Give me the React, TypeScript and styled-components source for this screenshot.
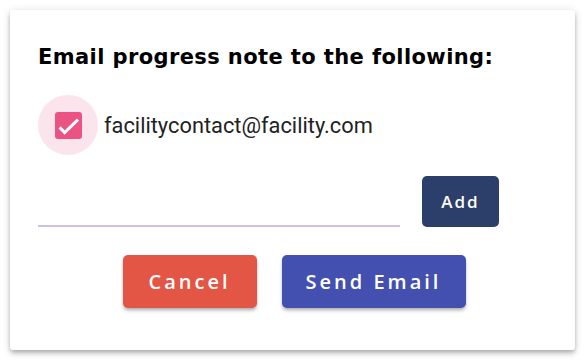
import styled, { createGlobalStyle } from 'styled-components';

const GlobalStyle = createGlobalStyle`
    * {
        box-sizing: border-box;
    }
    body {
        margin: 0;
        background: #ffffff;
    }
`
const StyledCard = styled.div`
    margin: 10px;
    width: 565px;
    height: 340px;
    background: #ffffff;
    border-radius: 3px;
    box-shadow: 0 2px 4px -1px rgba(0, 0, 0, 0.2), 0 4px 5px 0 rgba(0, 0, 0, 0.14), 0 1px 10px 0 rgba(0, 0, 0, 0.12);
    padding: 31px 28px 0 28px;
    display: flex;
    flex-direction: column;
`
const StyledTitle = styled.h2`
    font-family: 'DejaVu Sans', sans-serif;
    font-weight: 700;
    font-size: 21px;
    letter-spacing: 0.4px;
    line-height: 32px;
    color: #000000;
    margin: 0;
`
const StyledContactRow = styled.label`
    display: flex;
    align-items: center;
    gap: 6px;
    margin-top: 22px;
`
const StyledCheckCircle = styled.span`
    width: 60px;
    height: 60px;
    border-radius: 50%;
    background: #fce4ec;
    display: flex;
    align-items: center;
    justify-content: center;
`
const StyledContactText = styled.span`
    font-family: Roboto, sans-serif;
    font-size: 21.8px;
    color: #222222;
`
const StyledInputRow = styled.div`
    display: flex;
    align-items: flex-end;
    gap: 22px;
    margin-top: 21px;
`
const StyledInput = styled.input`
    width: 362px;
    height: 40px;
    border: none;
    border-bottom: 2px solid #cdc1e6;
    outline: none;
    font-family: Roboto, sans-serif;
    font-size: 16px;
    padding: 0;
    background: transparent;
`
const StyledButton = styled.button<{ $bg: string; $w: number; $h: number; $size: number; $spacing: number; $shadow?: boolean }>`
    width: ${({ $w }) => $w}px;
    height: ${({ $h }) => $h}px;
    background: ${({ $bg }) => $bg};
    color: #ffffff;
    border: none;
    border-radius: 5px;
    font-family: 'Open Sans', sans-serif;
    font-weight: 600;
    font-size: ${({ $size }) => $size}px;
    letter-spacing: ${({ $spacing }) => $spacing}px;
    padding: 0;
    box-shadow: ${({ $shadow }) => $shadow ? '0 3px 4px -1px rgba(0,0,0,0.25), 0 2px 3px 0 rgba(0,0,0,0.12)' : 'none'};
    cursor: pointer;
`
const StyledActions = styled.div`
    display: flex;
    justify-content: center;
    gap: 25px;
    margin-top: 28px;
    padding-left: 3px;
`

function CheckIcon(): JSX.Element {
    return (
        <svg width="27" height="27" viewBox="0 0 27 27">
            <rect x="0" y="0" width="27" height="27" rx="3" fill="#ec5385" />
            <path d="M4.6 15.4 L9.6 20.6 L23 7.6" fill="none" stroke="#ffffff" strokeWidth="3" />
        </svg>
    )
}

export default function App(): JSX.Element {
    return (
        <>
            <GlobalStyle />
            <StyledCard>
                <StyledTitle>Email progress note to the following:</StyledTitle>
                <StyledContactRow>
                    <StyledCheckCircle>
                        <CheckIcon />
                    </StyledCheckCircle>
                    <StyledContactText>facilitycontact@facility.com</StyledContactText>
                </StyledContactRow>
                <StyledInputRow>
                    <StyledInput type="text" />
                    <StyledButton $bg="#2c3e6a" $w={77} $h={51} $size={17} $spacing={2}>Add</StyledButton>
                </StyledInputRow>
                <StyledActions>
                    <StyledButton $bg="#e35544" $w={134} $h={53} $size={20} $spacing={3} $shadow>Cancel</StyledButton>
                    <StyledButton $bg="#4350b0" $w={184} $h={53} $size={20} $spacing={3} $shadow>Send Email</StyledButton>
                </StyledActions>
            </StyledCard>
        </>
    )
}
